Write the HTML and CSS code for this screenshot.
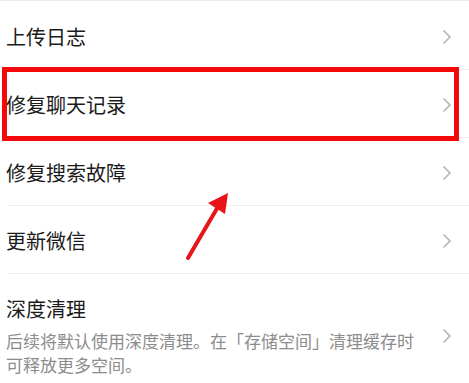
FILE: index.html
```html
<!DOCTYPE html>
<html lang="zh">
<head>
<meta charset="utf-8">
<link rel="stylesheet" href="styles.css">
</head>
<body>
<div class="page">
  <ul class="list">
    <li class="row"><span class="title">上传日志</span><svg class="chev" viewBox="0 0 10 16"><path d="M1.5 1.5 L8 8 L1.5 14.5"/></svg></li>
    <li class="row"><span class="title">修复聊天记录</span><svg class="chev" viewBox="0 0 10 16"><path d="M1.5 1.5 L8 8 L1.5 14.5"/></svg></li>
    <li class="row"><span class="title">修复搜索故障</span><svg class="chev" viewBox="0 0 10 16"><path d="M1.5 1.5 L8 8 L1.5 14.5"/></svg></li>
    <li class="row"><span class="title">更新微信</span><svg class="chev" viewBox="0 0 10 16"><path d="M1.5 1.5 L8 8 L1.5 14.5"/></svg></li>
    <li class="row row-tall">
      <div class="text">
        <div class="title">深度清理</div>
        <div class="sub">后续将默认使用深度清理。在「存储空间」清理缓存时可释放更多空间。</div>
      </div>
      <svg class="chev" viewBox="0 0 10 16"><path d="M1.5 1.5 L8 8 L1.5 14.5"/></svg>
    </li>
  </ul>
  <div class="highlight"></div>
  <svg class="arrow" viewBox="0 0 469 383" width="469" height="383">
    <line x1="188" y1="258" x2="219" y2="205" stroke="#e8141a" stroke-width="4" stroke-linecap="round"/>
    <polygon points="228,193 208,203 225,214" fill="#e8141a"/>
  </svg>
</div>
</body>
</html>
```
FILE: styles.css
```css
html, body {
  margin: 0;
  padding: 0;
  background: #ffffff;
}
.page {
  position: relative;
  width: 469px;
  height: 383px;
  overflow: hidden;
  font-family: "Noto Sans CJK SC", "Noto Sans", sans-serif;
  border-top: 1px solid #ededed;
}
.list {
  list-style: none;
  margin: 0;
  padding: 1px 0 0 0;
}
.row {
  display: flex;
  align-items: center;
  justify-content: space-between;
  padding: 1px 17px 0 6px;
  box-sizing: border-box;
  height: 68px;
  position: relative;
}
.row::after {
  content: "";
  position: absolute;
  left: 8px;
  right: 0;
  bottom: 0;
  height: 1px;
  background: #efefef;
}
.row-tall {
  height: auto;
  padding-top: 21px;
  padding-bottom: 8px;
}
.row-tall::after {
  display: none;
}
.title {
  font-size: 20px;
  line-height: 28px;
  color: #1b1b1b;
}
.text {
  flex: 1;
  padding-right: 22px;
}
.sub {
  margin-top: 6px;
  font-size: 17px;
  line-height: 24px;
  color: #8c8c8c;
}
.chev {
  width: 10px;
  height: 16px;
  flex: none;
  fill: none;
  stroke: #b5b5b5;
  stroke-width: 1.6;
}
.highlight {
  position: absolute;
  left: 2px;
  top: 66px;
  width: 457px;
  height: 74px;
  box-sizing: border-box;
  border: 5px solid #f20a0a;
}
.arrow {
  position: absolute;
  left: 0;
  top: -1px;
}
```
